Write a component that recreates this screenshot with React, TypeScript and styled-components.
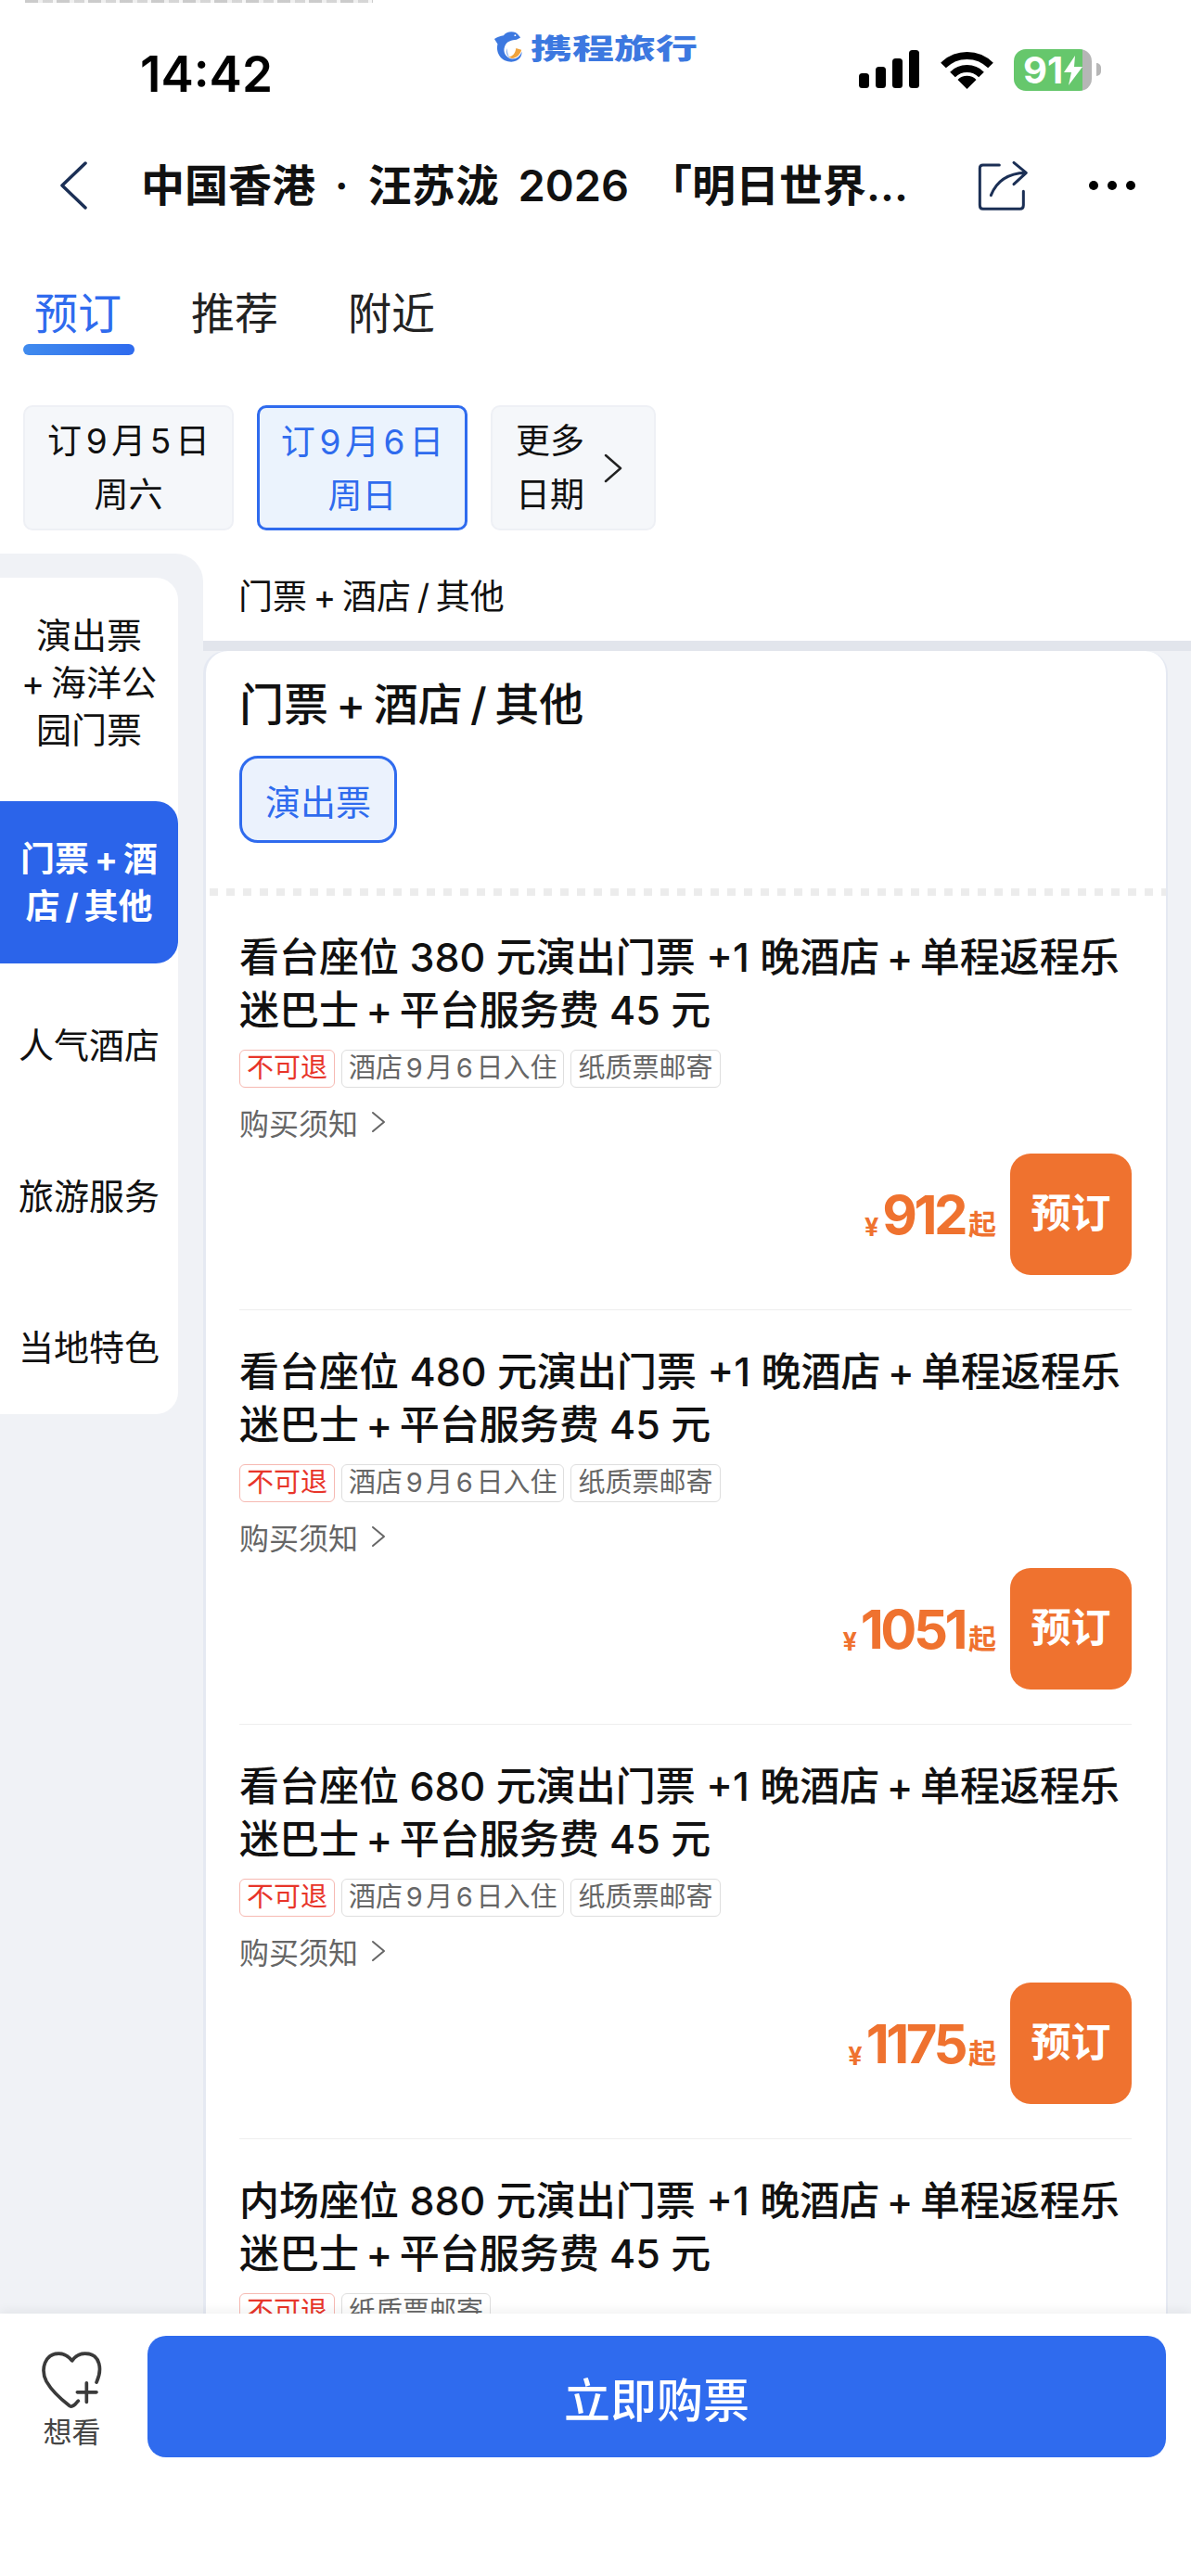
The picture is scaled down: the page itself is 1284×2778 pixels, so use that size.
import React from "react";
import styled, { createGlobalStyle } from "styled-components";

const GlobalStyle = createGlobalStyle`
  html, body {
    margin: 0;
    padding: 0;
    background: #fff;
  }
  body {
    font-family: "Inter", "Noto Sans CJK SC", sans-serif;
    color: #111;
    text-autospace: normal;
  }
  * {
    box-sizing: border-box;
  }
`;

const tickets = [
  { seat: "看台座位 380 元", price: "912", tags: ["酒店9月6日入住", "纸质票邮寄"] },
  { seat: "看台座位 480 元", price: "1051", tags: ["酒店9月6日入住", "纸质票邮寄"] },
  { seat: "看台座位 680 元", price: "1175", tags: ["酒店9月6日入住", "纸质票邮寄"] },
  { seat: "内场座位 880 元", price: "", tags: ["纸质票邮寄"] },
];

const App = () => {
  return (
    <Page>
      <GlobalStyle />
      <TopStrip />
      <StatusBar>
        <Time>14:42</Time>
        <Logo>
          <svg width="32" height="36" viewBox="22 24 100 108">
            <path
              d="M25 53C36 46 46 42 56 41C66 26 96 24 106 40L113 48L100 55C84 56 66 60 60 78C52 98 66 118 84 120C98 122 112 112 117 96C120 108 108 130 82 130C52 130 28 104 36 70Z"
              fill="#3c78e0"
            />
            <path d="M72 113C88 112 96 100 98 84L116 90C114 104 100 118 84 119Z" fill="#f0a33c" />
            <path d="M68 84C62 96 66 108 76 116C70 104 68 94 68 84Z" fill="#8fb4ee" />
            <circle cx="95" cy="41" r="3" fill="#fff" />
          </svg>
          <LogoText>携程旅行</LogoText>
        </Logo>
        <StatusIcons>
          <svg width="66" height="42" viewBox="0 0 66 42">
            <rect x="0" y="25" width="11" height="16" rx="3.5" fill="#000" />
            <rect x="18" y="18" width="11" height="23" rx="3.5" fill="#000" />
            <rect x="36" y="9" width="11" height="32" rx="3.5" fill="#000" />
            <rect x="54" y="0" width="11" height="41" rx="3.5" fill="#000" />
          </svg>
          <svg width="57" height="42" viewBox="0 0 57 42">
            <path d="M3 16.5A36 36 0 0 1 54 16.5" fill="none" stroke="#000" strokeWidth="8" />
            <path d="M13 26.5A22 22 0 0 1 44 26.5" fill="none" stroke="#000" strokeWidth="8" />
            <path d="M28.5 42L18.5 32A14 14 0 0 1 38.5 32Z" fill="#000" />
          </svg>
          <Battery>
            91
            <svg width="22" height="32" viewBox="0 0 22 32">
              <path d="M13 0L1 18H9L6 32L21 12H12Z" fill="#fff" />
            </svg>
          </Battery>
        </StatusIcons>
      </StatusBar>

      <NavBar>
        <svg width="32" height="52" viewBox="0 0 32 52">
          <path d="M29 2L4 26L29 50" fill="none" stroke="#1b2f55" strokeWidth="3.5" strokeLinecap="round" strokeLinejoin="round" />
        </svg>
        <NavTitle>中国香港 · 汪苏泷 2026 「明日世界...</NavTitle>
        <ShareIcon width="55" height="55" viewBox="520 445 165 165">
          <path
            d="M590 460H537Q527 460 527 470V590Q527 602 537 602H657Q668 602 668 590V545M563 558C580 515 615 487 675 485M637 452L677 485L637 522"
            fill="none"
            stroke="#1b2f55"
            strokeWidth="9"
            strokeLinecap="round"
            strokeLinejoin="round"
          />
        </ShareIcon>
        <MoreDots>
          <i />
          <i />
          <i />
        </MoreDots>
      </NavBar>

      <Tabs>
        <Tab $active>
          预订
          <TabLine />
        </Tab>
        <Tab>推荐</Tab>
        <Tab>附近</Tab>
      </Tabs>

      <DateRow>
        <DateChip>
          订9月5日
          <br />
          周六
        </DateChip>
        <DateChip $active>
          订9月6日
          <br />
          周日
        </DateChip>
        <MoreChip>
          <div>
            更多
            <br />
            日期
          </div>
          <svg width="22" height="34" viewBox="0 0 22 34">
            <path d="M3 3L19 17L3 31" fill="none" stroke="#222" strokeWidth="2.5" strokeLinecap="round" strokeLinejoin="round" />
          </svg>
        </MoreChip>
      </DateRow>

      <Body>
        <SideColumn>
          <SideMenu>
            <SideFirst>
              演出票
              <br />
              +{"\u2009"}海洋公
              <br />
              园门票
            </SideFirst>
            <SideActive>
              门票{"\u2009"}+{"\u2009"}酒
              <br />
              店{"\u2009"}/{"\u2009"}其他
            </SideActive>
            <SideItem>人气酒店</SideItem>
            <SideItem>旅游服务</SideItem>
            <SideItem>当地特色</SideItem>
          </SideMenu>
        </SideColumn>

        <MainColumn>
          <SubHeader>门票{"\u2009"}+{"\u2009"}酒店{"\u2009"}/{"\u2009"}其他</SubHeader>
          <CardArea>
            <Card>
              <CardHead>
                <CardTitle>门票{"\u2009"}+{"\u2009"}酒店{"\u2009"}/{"\u2009"}其他</CardTitle>
                <FilterTag>演出票</FilterTag>
              </CardHead>
              <DashedLine />
              {tickets.map((ticket) => (
                <TicketItem key={ticket.seat}>
                  <TicketTitle>
                    {ticket.seat}演出门票 +1 晚酒店{"\u2009"}+{"\u2009"}单程返程乐
                    <br />
                    迷巴士{"\u2009"}+{"\u2009"}平台服务费 45 元
                  </TicketTitle>
                  <TagRow>
                    <Tag $warn>不可退</Tag>
                    {ticket.tags.map((tag) => (
                      <Tag key={tag}>{tag}</Tag>
                    ))}
                  </TagRow>
                  {ticket.price && (
                    <>
                      <Notice>
                        购买须知
                        <svg width="16" height="24" viewBox="0 0 16 24">
                          <path d="M2 2L14 12L2 22" fill="none" stroke="#666" strokeWidth="2" strokeLinecap="round" strokeLinejoin="round" />
                        </svg>
                      </Notice>
                      <PriceRow>
                        <PriceSign>¥</PriceSign>
                        <PriceValue>{ticket.price}</PriceValue>
                        <PriceUnit>起</PriceUnit>
                        <BookButton>预订</BookButton>
                      </PriceRow>
                    </>
                  )}
                </TicketItem>
              ))}
            </Card>
          </CardArea>
        </MainColumn>
      </Body>

      <Footer>
        <WishBox>
          <svg width="75" height="67" viewBox="30 40 225 200">
            <path
              d="M222 148C240 110 238 55 185 55C165 55 150 68 143 78C135 68 120 55 100 55C55 55 40 105 60 145C80 180 110 205 135 224C148 232 155 215 163 208M160 180H222M190 150V212"
              fill="none"
              stroke="#3a3a3a"
              strokeWidth="11"
              strokeLinecap="round"
              strokeLinejoin="round"
            />
          </svg>
          <WishText>想看</WishText>
        </WishBox>
        <BuyButton>立即购票</BuyButton>
      </Footer>
    </Page>
  );
};

export default App;

const Page = styled.div`
  display: flex;
  flex-direction: column;
  width: 1284px;
  height: 2778px;
  overflow: hidden;
  background: #fff;
`;

const TopStrip = styled.div`
  width: 375px;
  height: 3px;
  margin-left: 27px;
  flex-shrink: 0;
  opacity: 0.7;
  background: repeating-linear-gradient(90deg, #b5b5b5 0 14px, #e8e8e8 14px 19px, #c4c4c4 19px 30px, #f2f2f2 30px 34px);
`;

const StatusBar = styled.div`
  display: flex;
  align-items: flex-start;
  height: 137px;
  padding-left: 151px;
  flex-shrink: 0;
`;

const Time = styled.div`
  width: 143px;
  margin-top: 47px;
  font-size: 53px;
  line-height: 60px;
  font-weight: 600;
  color: #000;
`;

const Logo = styled.div`
  display: flex;
  align-items: center;
  gap: 8px;
  margin-top: 29px;
  margin-left: 238px;
`;

const LogoText = styled.div`
  font-size: 30px;
  line-height: 36px;
  font-weight: 900;
  color: #3c78e0;
  transform: scaleX(1.5);
  transform-origin: left center;
  font-family: "Noto Sans CJK SC", sans-serif;
`;

const StatusIcons = styled.div`
  display: flex;
  align-items: flex-end;
  gap: 22px;
  margin-left: auto;
  margin-top: 50px;
  margin-right: 107px;
`;

const Battery = styled.div`
  position: relative;
  display: flex;
  align-items: center;
  justify-content: flex-start;
  width: 84px;
  height: 45px;
  padding-left: 10px;
  margin-bottom: -2px;
  border-radius: 13px;
  background: linear-gradient(90deg, #66c76c 0 88%, #b6b6b6 88% 100%);
  color: #fff;
  font-size: 40px;
  line-height: 45px;
  font-weight: 700;
  &::after {
    content: "";
    position: absolute;
    right: -10px;
    top: 15px;
    width: 5px;
    height: 14px;
    border-radius: 0 6px 6px 0;
    background: #b6b6b6;
  }
`;

const NavBar = styled.div`
  display: flex;
  align-items: center;
  height: 120px;
  padding-left: 63px;
  flex-shrink: 0;
`;

const NavTitle = styled.div`
  width: 888px;
  margin-left: 57px;
  font-size: 47px;
  line-height: 60px;
  font-weight: 600;
  word-spacing: 9px;
  white-space: nowrap;
  overflow: hidden;
`;

const ShareIcon = styled.svg`
  margin-left: 14px;
`;

const MoreDots = styled.div`
  display: flex;
  gap: 10px;
  margin-left: 65px;
  i {
    display: block;
    width: 10px;
    height: 10px;
    border-radius: 50%;
    background: #000;
  }
`;

const Tabs = styled.div`
  display: flex;
  gap: 75px;
  height: 177px;
  padding-left: 37px;
  padding-top: 48px;
  flex-shrink: 0;
`;

const Tab = styled.div<{ $active?: boolean }>`
  font-size: 47px;
  line-height: 60px;
  color: ${({ $active }) => ($active ? "#2f6bee" : "#222")};
`;

const TabLine = styled.div`
  width: 120px;
  height: 12px;
  margin: 3px -14px 0 -12px;
  border-radius: 6px;
  background: linear-gradient(90deg, #408bee, #2f6bee);
`;

const DateRow = styled.div`
  display: flex;
  gap: 25px;
  height: 160px;
  padding-left: 25px;
  flex-shrink: 0;
`;

const DateChip = styled.div<{ $active?: boolean }>`
  width: 227px;
  height: 135px;
  padding-top: 8px;
  border-radius: 10px;
  text-align: center;
  font-size: 37px;
  line-height: 58px;
  border: ${({ $active }) => ($active ? "3px solid #2f6bee" : "2px solid #eef0f5")};
  background: ${({ $active }) => ($active ? "#ebf3fd" : "#f5f7fa")};
  color: ${({ $active }) => ($active ? "#2f6bee" : "#111")};
`;

const MoreChip = styled.div`
  display: flex;
  align-items: center;
  gap: 20px;
  width: 178px;
  height: 135px;
  padding-left: 25px;
  border-radius: 10px;
  border: 2px solid #eef0f5;
  background: #f5f7fa;
  font-size: 37px;
  line-height: 58px;
`;

const Body = styled.div`
  display: flex;
  flex: 1;
  min-height: 0;
  overflow: hidden;
`;

const SideColumn = styled.div`
  width: 219px;
  padding-top: 26px;
  flex-shrink: 0;
  border-top-right-radius: 30px;
  background: #f0f2f6;
`;

const SideMenu = styled.div`
  width: 192px;
  height: 902px;
  overflow: hidden;
  border-radius: 0 24px 24px 0;
  background: #fff;
  font-size: 38px;
  text-align: center;
`;

const SideFirst = styled.div`
  height: 241px;
  padding-top: 37px;
  line-height: 51px;
`;

const SideActive = styled.div`
  display: flex;
  align-items: center;
  justify-content: center;
  height: 175px;
  margin-bottom: 7px;
  border-radius: 0 24px 24px 0;
  background: #2b64ea;
  color: #fff;
  font-weight: 700;
  font-size: 37px;
  line-height: 51px;
`;

const SideItem = styled.div`
  height: 163px;
  line-height: 163px;
`;

const MainColumn = styled.div`
  display: flex;
  flex-direction: column;
  flex: 1;
  min-width: 0;
`;

const SubHeader = styled.div`
  height: 94px;
  padding-left: 38px;
  font-size: 37px;
  line-height: 94px;
  flex-shrink: 0;
`;

const CardArea = styled.div`
  flex: 1;
  padding: 11px 25px 0 3px;
  background: linear-gradient(#e2e5ec 0 11px, #f0f2f6 11px 100%);
`;

const Card = styled.div`
  height: 100%;
  overflow: hidden;
  border-radius: 24px 24px 0 0;
  border: solid #e5e9f2;
  border-width: 0 2px 0 0;
  background: #fff;
  box-shadow: -3px 0 0 #e5e9f2;
`;

const CardHead = styled.div`
  height: 256px;
  padding: 26px 0 0 36px;
`;

const CardTitle = styled.div`
  font-size: 48px;
  line-height: 64px;
  font-weight: 500;
`;

const FilterTag = styled.div`
  display: flex;
  align-items: center;
  justify-content: center;
  width: 170px;
  height: 94px;
  margin-top: 23px;
  border: 3px solid #2f6bee;
  border-radius: 20px;
  background: #ebf2fd;
  color: #2f6bee;
  font-size: 38px;
`;

const DashedLine = styled.div`
  height: 8px;
  margin-left: 4px;
  background: repeating-linear-gradient(90deg, #ececec 0 9px, #fff 9px 18px);
`;

const TicketItem = styled.div`
  margin: 0 37px 0 36px;
  padding: 38px 0 37px;
  border-bottom: 1px solid #eeeeee;
`;

const TicketTitle = styled.div`
  font-size: 43px;
  line-height: 57px;
  font-weight: 500;
  white-space: nowrap;
`;

const TagRow = styled.div`
  display: flex;
  gap: 7px;
  margin-top: 14px;
`;

const Tag = styled.div<{ $warn?: boolean }>`
  height: 41px;
  padding: 0 7px;
  border-radius: 6px;
  border: 1.5px solid ${({ $warn }) => ($warn ? "#f6b9b2" : "#dedede")};
  color: ${({ $warn }) => ($warn ? "#e8352a" : "#666")};
  font-size: 29px;
  line-height: 38px;
`;

const Notice = styled.div`
  display: flex;
  align-items: center;
  gap: 14px;
  height: 36px;
  margin-top: 19px;
  color: #666;
  font-size: 32px;
`;

const PriceRow = styled.div`
  display: flex;
  align-items: flex-end;
  justify-content: flex-end;
  height: 131px;
  margin-top: 16px;
  color: #ef722f;
  font-weight: 700;
`;

const PriceSign = styled.div`
  margin-right: 4px;
  margin-bottom: 36px;
  font-size: 27px;
  line-height: 30px;
`;

const PriceValue = styled.div`
  margin-bottom: 35px;
  font-size: 58px;
  line-height: 60px;
  letter-spacing: -3.5px;
`;

const PriceUnit = styled.div`
  margin-left: 4px;
  margin-bottom: 37px;
  font-size: 30px;
  line-height: 36px;
`;

const BookButton = styled.div`
  display: flex;
  align-items: center;
  justify-content: center;
  width: 131px;
  height: 131px;
  margin-left: 15px;
  padding-bottom: 10px;
  border-radius: 22px;
  background: #ef722f;
  color: #fff;
  font-size: 43px;
  font-weight: 700;
`;

const Footer = styled.div`
  position: relative;
  display: flex;
  align-items: flex-start;
  height: 283px;
  padding: 24px 27px 0 0;
  flex-shrink: 0;
  background: #fff;
  box-shadow: 0 -4px 10px rgba(0, 0, 0, 0.05);
`;

const WishBox = styled.div`
  display: flex;
  flex-direction: column;
  align-items: center;
  width: 159px;
  padding: 14px 4px 0 0;
`;

const WishText = styled.div`
  margin-top: 4px;
  color: #444;
  font-size: 31px;
  line-height: 38px;
`;

const BuyButton = styled.div`
  display: flex;
  align-items: center;
  justify-content: center;
  flex: 1;
  height: 131px;
  border-radius: 20px;
  background: #2f6bee;
  color: #fff;
  font-size: 50px;
  font-weight: 500;
`;
